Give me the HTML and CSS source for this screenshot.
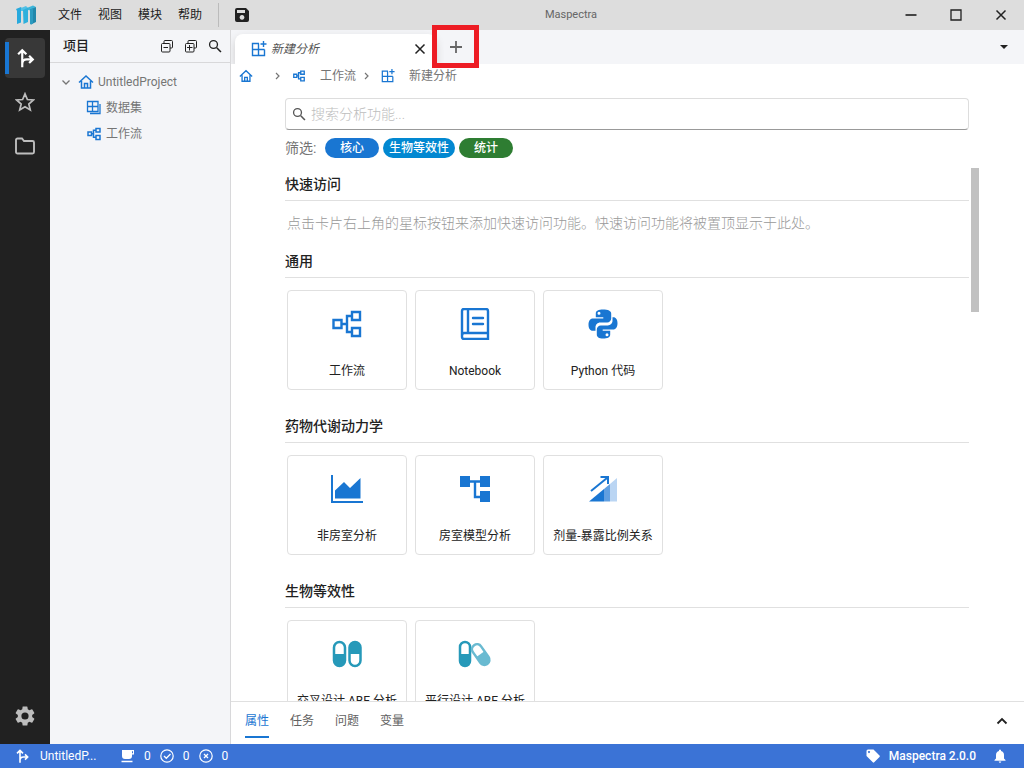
FILE: index.html
```html
<!DOCTYPE html>
<html lang="zh-CN">
<head>
<meta charset="utf-8">
<title>Maspectra</title>
<link rel="stylesheet" href="styles.css">
</head>
<body>
<svg class="defs" aria-hidden="true">
  <symbol id="home" viewBox="0 0 16 16"><path d="M1 8.500 8 2l7 6.500M3.500 7v7h9V7M6.500 14V9.500h3V14" fill="none" stroke="currentColor" stroke-width="1.500"/></symbol>
  <symbol id="flow" viewBox="0 0 32 32"><path d="M4 12h7v7H4zM20 5h8v7h-8zM20 19h8v8h-8zM11 15.500h5M20 8.500h-5v14h5" fill="none" stroke="currentColor" stroke-width="3"/></symbol>
  <symbol id="newgrid" viewBox="0 0 16 16"><path d="M8 2.500H1.500v12h12V8.500M1.500 8.500h12M7.500 2.500v12M12.500 0v6M9.500 3h6" fill="none" stroke="currentColor" stroke-width="1.400"/></symbol>
  <symbol id="branch" viewBox="0 0 24 24"><path d="M9 22V4M4.500 8L9 3.500 13.500 8M9 18.500q0-5 5-5h6M16.500 9.500l4 4-4 4" fill="none" stroke="currentColor" stroke-width="2.400"/></symbol>
  <symbol id="search" viewBox="0 0 16 16"><path d="M10 10l4.800 4.800" fill="none" stroke="currentColor" stroke-width="1.800"/><circle cx="6.300" cy="6.300" r="4.500" fill="none" stroke="currentColor" stroke-width="1.500"/></symbol>
  <symbol id="chev" viewBox="0 0 8 8"><path d="M2 1l3 3-3 3" fill="none" stroke="currentColor" stroke-width="1.200"/></symbol>
  <symbol id="close" viewBox="0 0 12 12"><path d="M1.500 1.500l9 9M10.500 1.500l-9 9" fill="none" stroke="currentColor" stroke-width="1.500"/></symbol>
</svg>
<div class="app">
  <header class="titlebar">
    <svg class="logo" viewBox="0 0 20 20"><path d="M0 4l5-2v15.500L1 19V6z" fill="#27a9dd"/><path d="M5 2.500L8 4v2L5 5z" fill="#1c8dbd"/><path d="M5 3l5-2 2 2-5 3H5z" fill="#52c1e6"/><path d="M7 5l5-2.500V17l-4.500 2z" fill="#2fb0dc"/><path d="M12 2.500l5-2L20 2l-5.500 3.500L12 5z" fill="#3bb5da"/><path d="M14 4.500L20 2v15l-5 2.500-1-1z" fill="#2187ab"/><path d="M14 4.500l3-1.300V18.500l-2 1-1-1z" fill="#2b9bc1"/></svg>
    <nav class="menu"><button>文件</button><button>视图</button><button>模块</button><button>帮助</button></nav>
    <button class="save" aria-label="保存"><svg width="16" height="16" viewBox="0 0 16 16"><path fill-rule="evenodd" d="M3 1h9l3 3v9a2 2 0 0 1-2 2H3a2 2 0 0 1-2-2V3a2 2 0 0 1 2-2zM3 3v3h8V3zM8 8a2.400 2.400 0 1 0 .01 0z" fill="currentColor"/></svg></button>
    <span class="apptitle">Maspectra</span>
    <div class="winctl">
      <button aria-label="最小化"><svg width="12" height="12" viewBox="0 0 12 12"><path d="M0.500 6h11" stroke="#444" stroke-width="2"/></svg></button>
      <button aria-label="最大化"><svg width="12" height="12" viewBox="0 0 12 12"><path d="M1 1h10v10H1z" fill="none" stroke="currentColor" stroke-width="1.300"/></svg></button>
      <button aria-label="关闭"><svg width="12" height="12"><use href="#close"/></svg></button>
    </div>
  </header>
  <div class="body">
    <nav class="rail">
      <button class="active" aria-label="项目"><svg width="22" height="22"><use href="#branch"/></svg></button>
      <button aria-label="收藏"><svg width="20" height="20" viewBox="0 0 20 20"><path d="M10 1.800l2.400 5.700 6 .5-4.600 4 1.500 6-5.300-3.200L4.700 18l1.500-6-4.600-4 6-.5z" fill="none" stroke="currentColor" stroke-width="1.700"/></svg></button>
      <button aria-label="文件夹"><svg width="20" height="20" viewBox="0 0 20 20"><path d="M1 16V4a1.500 1.500 0 0 1 1.500-1.500H7l2 2.500h8.500A1.500 1.500 0 0 1 19 6.500V16a1.500 1.500 0 0 1-1.500 1.500h-15A1.500 1.500 0 0 1 1 16z" fill="none" stroke="currentColor" stroke-width="1.900"/></svg></button>
      <button class="gear" aria-label="设置"><svg width="24" height="24" viewBox="0 0 24 24"><path fill="currentColor" d="M19.140 12.940c.04-.3.060-.61.060-.94 0-.32-.02-.64-.07-.94l2.030-1.580a.49.49 0 0 0 .12-.61l-1.920-3.320a.49.49 0 0 0-.59-.22l-2.390.96c-.5-.38-1.030-.7-1.620-.94l-.36-2.540A.48.48 0 0 0 13.920 2.400h-3.840c-.24 0-.43.17-.47.41l-.36 2.540c-.59.24-1.130.57-1.620.94l-2.390-.96a.48.48 0 0 0-.59.220L2.740 8.870a.47.47 0 0 0 .12.610l2.030 1.580c-.05.3-.09.630-.09.940s.02.640.07.940l-2.030 1.580a.49.49 0 0 0-.12.610l1.920 3.320c.12.220.37.290.59.220l2.390-.96c.5.380 1.030.7 1.620.940l.36 2.540c.05.240.24.410.48.410h3.840c.24 0 .44-.17.47-.41l.36-2.540c.59-.24 1.130-.56 1.620-.94l2.390.96c.22.080.47 0 .59-.22l1.920-3.320a.47.47 0 0 0-.12-.61zM12 15.600A3.600 3.600 0 1 1 12 8.400a3.600 3.600 0 0 1 0 7.200z"/></svg></button>
    </nav>
    <aside class="side">
      <div class="sidehead"><h2>项目</h2>
        <button aria-label="全部折叠"><svg width="14" height="14" viewBox="0 0 14 14"><path d="M4 4V2.500a1 1 0 0 1 1-1h6.500a1 1 0 0 1 1 1V8a1 1 0 0 1-1 1H10M2.500 4.500h6.500a1 1 0 0 1 1 1V12a1 1 0 0 1-1 1H2.500a1 1 0 0 1-1-1V5.500a1 1 0 0 1 1-1zM3.500 8.500h4.500" fill="none" stroke="currentColor"/></svg></button>
        <button aria-label="全部展开"><svg width="14" height="14" viewBox="0 0 14 14"><path d="M4 4V2.500a1 1 0 0 1 1-1h6.500a1 1 0 0 1 1 1V8a1 1 0 0 1-1 1H10M2.500 4.500h6.500a1 1 0 0 1 1 1V12a1 1 0 0 1-1 1H2.500a1 1 0 0 1-1-1V5.500a1 1 0 0 1 1-1zM3 8.500h5.500M5.500 6v5.500" fill="none" stroke="currentColor"/></svg></button>
        <button aria-label="搜索"><svg width="14" height="14"><use href="#search"/></svg></button>
      </div>
      <ul class="tree">
        <li><svg class="caret" width="8" height="8" viewBox="0 0 8 8"><path d="M0.500 2.500L4 6l3.500-3.500" fill="none" stroke="currentColor" stroke-width="1.300"/></svg><svg class="blue" width="16" height="16"><use href="#home"/></svg><span>UntitledProject</span></li>
        <li class="child"><svg class="blue" width="16" height="16" viewBox="0 0 16 16"><path d="M1.500 1.500h10.500v10H1.500zM1.500 6.500H12M6.500 1.500v10M4 13.500h10V4" fill="none" stroke="currentColor" stroke-width="1.300"/></svg><span>数据集</span></li>
        <li class="child"><svg class="blue" width="16" height="16"><use href="#flow"/></svg><span>工作流</span></li>
      </ul>
    </aside>
    <main class="main">
      <div class="tabs">
        <div class="tab"><svg class="blue" width="16" height="16"><use href="#newgrid"/></svg><span>新建分析</span><button aria-label="关闭标签"><svg width="12" height="12"><use href="#close"/></svg></button></div>
        <button class="add" aria-label="新建标签"><svg width="12" height="12" viewBox="0 0 12 12"><path d="M6 0v12M0 6h12" stroke="currentColor" stroke-width="1.800"/></svg><i class="mark"></i></button>
        <button class="more" aria-label="更多标签"><svg width="8" height="8" viewBox="0 0 8 8"><path d="M0 2h8L4 6z" fill="currentColor"/></svg></button>
      </div>
      <nav class="crumbs">
        <a href="#" aria-label="主页"><svg class="blue" width="14" height="14"><use href="#home"/></svg></a>
        <svg class="sep wide" width="8" height="8"><use href="#chev"/></svg>
        <a href="#"><svg class="blue" width="14" height="14"><use href="#flow"/></svg>工作流</a>
        <svg class="sep" width="8" height="8"><use href="#chev"/></svg>
        <a href="#"><svg class="blue" width="14" height="14"><use href="#newgrid"/></svg>新建分析</a>
      </nav>
      <div class="page">
        <label class="search"><svg width="14" height="14"><use href="#search"/></svg><input type="text" placeholder="搜索分析功能..." aria-label="搜索分析功能"></label>
        <div class="filters"><span>筛选:</span><button>核心</button><button class="be">生物等效性</button><button class="stat">统计</button></div>
        <div class="scroller">
          <div class="sections">
            <section><h3>快速访问</h3><p>点击卡片右上角的星标按钮来添加快速访问功能。快速访问功能将被置顶显示于此处。</p></section>
            <section><h3>通用</h3><div class="cards">
              <button class="card"><svg viewBox="0 0 32 32"><path d="M2.500 12h8v8h-8zM21 4h8v8h-8zM21 20h8v8h-8zM11 16h5M21 8h-5v16h5" fill="none" stroke="currentColor" stroke-width="2.400"/></svg><span>工作流</span></button>
              <button class="card"><svg viewBox="0 0 32 32"><path d="M5 1h22q2 0 2 2v28H5q-2 0-2-2V3q0-2 2-2zM9 1v24M3 28q0-3 2-3h24" fill="none" stroke="currentColor" stroke-width="2.400"/><path d="M14 10h10M14 16h10" stroke="currentColor" stroke-width="2.400" stroke-linecap="round"/></svg><span>Notebook</span></button>
              <button class="card"><svg viewBox="0 0 32 32"><path fill-rule="evenodd" fill="currentColor" d="M15.800 1.500c-4 0-7 1-7 4v3.700h7.500v1.300H6c-3 0-4.500 2.700-4.500 6.300 0 3.500 1.500 6 4.200 6h2.800v-3.500c0-2.500 2-4.700 4.700-4.700h7c2.200 0 4-1.800 4-4V5.500c0-2.500-3-4-8.400-4zM12 3.700a1.500 1.500 0 1 1 0 3 1.500 1.500 0 0 1 0-3z"/><path fill-rule="evenodd" fill="currentColor" d="M16.200 30.500c4 0 7-1 7-4v-3.700h-7.500v-1.300H26c3 0 4.500-2.700 4.500-6.300 0-3.500-1.500-6-4.200-6h-.8v3.500c0 2.500-2 4.700-4.700 4.700h-7c-2.200 0-4 1.800-4 4v5.100c0 2.500 2 4 6.400 4zM20 28.300a1.500 1.500 0 1 1 0-3 1.500 1.500 0 0 1 0 3z"/></svg><span>Python 代码</span></button>
            </div></section>
            <section><h3>药物代谢动力学</h3><div class="cards">
              <button class="card"><svg viewBox="0 0 32 32"><path d="M1 2v27h31" fill="none" stroke="currentColor" stroke-width="2"/><path d="M4 25.500v-8l9-8.500 6 6L29.500 5v20.500z" fill="currentColor"/></svg><span>非房室分析</span></button>
              <button class="card"><svg viewBox="0 0 32 32"><path d="M1 3h10v11H1zM21 3h10v11H21zM21 18h10v11H21z" fill="currentColor"/><path d="M10 8.500h12M16 8.500V24h6" fill="none" stroke="currentColor" stroke-width="2.400"/></svg><span>房室模型分析</span></button>
              <button class="card"><svg viewBox="0 0 32 32"><path d="M2 28.500L17 16v12.500z" fill="currentColor"/><path d="M17 16l6-5v17.500h-6z" fill="#609fe1"/><path d="M23 11l7-6v23.500h-7z" fill="#bad5f3"/><path d="M4 18L20 5M13.500 4H21v7" fill="none" stroke="currentColor" stroke-width="2"/></svg><span>剂量-暴露比例关系</span></button>
            </div></section>
            <section><h3>生物等效性</h3><div class="cards">
              <button class="card teal"><svg viewBox="0 0 32 32"><rect x="3" y="4" width="11" height="24" rx="5.500" fill="none" stroke="currentColor" stroke-width="2.500"/><path d="M3 16h11v7a5 5 0 0 1-11 0z" fill="currentColor"/><rect x="18.500" y="4" width="11" height="24" rx="5.500" fill="none" stroke="currentColor" stroke-width="2.500"/><path d="M18.500 16h11V9a5 5 0 0 0-11 0z" fill="currentColor"/></svg><span>交叉设计 ABE 分析</span></button>
              <button class="card teal"><svg class="pills" viewBox="0 0 32 32"><rect x="1" y="4" width="10" height="24" rx="5" fill="none" stroke="currentColor" stroke-width="2.500"/><path d="M1 16h10v7a5 5 0 0 1-10 0z" fill="currentColor"/><g color="#69bad1" transform="rotate(-35 22 17)"><rect x="17" y="5" width="10" height="23" rx="5" fill="none" stroke="currentColor" stroke-width="2.500"/><path d="M17 16h10v7a5 5 0 0 1-10 0z" fill="currentColor"/></g></svg><span>平行设计 ABE 分析</span></button>
            </div></section>
          </div>
          <div class="bar"><div class="thumb"></div></div>
        </div>
      </div>
      <div class="panel"><button class="on">属性</button><button>任务</button><button>问题</button><button>变量</button><button class="up" aria-label="展开面板"><svg width="12" height="12" viewBox="0 0 12 12"><path d="M1.500 8.500L6 4l4.500 4.500" fill="none" stroke="currentColor" stroke-width="1.800"/></svg></button></div>
    </main>
  </div>
  <footer class="status">
    <svg class="proj" width="16" height="16"><use href="#branch"/></svg><span class="pname">UntitledP...</span>
    <svg width="14" height="14" viewBox="0 0 14 14"><path fill-rule="evenodd" d="M1 1h12v4.500h-2V7a3 3 0 0 1-3 3H4a3 3 0 0 1-3-3zM11 2.200v2h1v-2z" fill="currentColor"/><path d="M0.500 12.500h11" stroke="currentColor" stroke-width="1.500"/></svg><span class="n">0</span>
    <svg width="14" height="14" viewBox="0 0 14 14"><circle cx="7" cy="7" r="6.200" fill="none" stroke="currentColor" stroke-width="1.200"/><path d="M4 7l2.300 2.300L10.500 5" fill="none" stroke="currentColor" stroke-width="1.300"/></svg><span class="n">0</span>
    <svg width="14" height="14" viewBox="0 0 14 14"><circle cx="7" cy="7" r="6.200" fill="none" stroke="currentColor" stroke-width="1.200"/><path d="M5 5l4 4M9 5L5 9" fill="none" stroke="currentColor" stroke-width="1.300"/></svg><span class="n">0</span>
    <div class="right"><svg width="14" height="14" viewBox="0 0 14 14"><path fill-rule="evenodd" d="M0.500 2a1.500 1.500 0 0 1 1.500-1.500h5.500l6 6q.7.700 0 1.400L8.200 13.300q-.7.700-1.400 0L0.500 7zM3 2a1 1 0 1 0 .01 0z" fill="currentColor"/></svg><span>Maspectra 2.0.0</span><svg class="bell" width="14" height="14" viewBox="0 0 14 14"><path d="M6 2V.8h2V2c2 .5 3 2 3 4v3.500l1.500 1.500v.700h-11V11L3 9.500V6c0-2 1-3.500 3-4zM5.700 12.500h2.600q-.2 1.200-1.300 1.200t-1.300-1.200z" fill="currentColor"/></svg></div>
  </footer>
</div>
</body>
</html>
```
FILE: styles.css
```css
* { box-sizing: border-box; }
body { margin: 0; font: 12px/16px Roboto, "Noto Sans CJK SC", sans-serif; color: #212121; }
button { border: 0; padding: 0; background: none; font: inherit; color: inherit; cursor: pointer; }
svg { display: block; flex: none; }
a { color: inherit; text-decoration: none; }
h2, h3, p, ul { margin: 0; padding: 0; }
.defs { position: absolute; width: 0; height: 0; }
.blue { color: #1976d2; }

.app { height: 100vh; display: flex; flex-direction: column; overflow: hidden; }
.titlebar { position: relative; flex: none; height: 30px; display: flex; align-items: center; background: #ddd; }
.logo { width: 20px; height: 20px; margin-left: 16px; }
.menu { display: flex; gap: 16px; margin-left: 22px; padding-right: 16px; border-right: 1px solid #bbb; line-height: 24px; }
.save { margin-left: 15px; }
.apptitle { position: absolute; left: 50%; width: 120px; margin-left: -1px; text-align: center; font-size: 11px; color: #666; }
.winctl { display: flex; margin-left: auto; padding-right: 1px; }
.winctl button { width: 45px; height: 30px; display: grid; place-items: center; }

.body { flex: 1; min-height: 0; display: flex; }
.rail { flex: none; width: 50px; background: #212121; color: #bdbdbd; display: flex; flex-direction: column; align-items: center; gap: 4px; padding: 8px 0; }
.rail button { width: 40px; height: 40px; display: grid; place-items: center; border-radius: 4px; }
.rail .active { background: linear-gradient(#1976d2, #1976d2) 0 50% / 4px 32px no-repeat #383838; color: #fff; }
.rail .gear { margin-top: auto; }

.side { flex: none; width: 181px; background: #f4f5f8; border-right: 1px solid #d8d8da; }
.sidehead { height: 33px; display: flex; align-items: center; gap: 10px; padding: 0 8px 0 13px; border-bottom: 1px solid #d8d8da; }
.sidehead h2 { font-size: 13px; font-weight: 500; margin-right: auto; }
.tree { list-style: none; padding: 6px 0; color: #757575; }
.tree li { height: 26px; display: flex; align-items: center; gap: 4px; padding-left: 12px; }
.tree .child { padding-left: 36px; }
.tree .caret { margin-right: 4px; }

.main { flex: 1; min-width: 0; display: flex; flex-direction: column; background: #fff; }
.tabs { flex: none; height: 34px; display: flex; align-items: stretch; background: #f4f5f8; padding-top: 4px; }
.tab { width: 201px; margin-left: 4px; display: flex; align-items: center; gap: 4px; padding: 0 10px 0 16px; background: #fff; border-radius: 8px 8px 0 0; box-shadow: 0 4px 8px #ccc; clip-path: inset(-4px -8px 0 -4px); color: #555; font-style: italic; }
.tab button { margin-left: auto; color: #212121; }
.add { position: relative; width: 40px; padding-bottom: 4px; display: grid; place-items: center; color: #666; }
.mark { position: absolute; top: -9px; left: -4px; width: 47px; height: 43px; border: 5px solid #ed1c24; z-index: 1; }
.more { margin: 0 16px 4px auto; }
.crumbs { flex: none; height: 24px; display: flex; align-items: center; padding-left: 8px; color: #757575; }
.crumbs a { display: flex; align-items: center; gap: 14px; }
.crumbs .sep { margin: 0 10px 0 7px; }
.crumbs .wide { margin: 0 10px 0 21px; }

.page { flex: 1; min-height: 0; display: flex; flex-direction: column; padding: 10px 45px 0 54px; }
.search { flex: none; height: 32px; margin-right: 10px; display: flex; align-items: center; gap: 5px; padding: 0 6px; border: 1px solid #ddd; border-bottom-color: #999; border-radius: 4px; color: #555; }
.search input { flex: 1; min-width: 0; border: 0; outline: 0; padding: 0; background: none; font: 14px/20px Roboto, "Noto Sans CJK SC", sans-serif; }
.search input::placeholder { color: #bdbdbd; font-weight: 300; }
.filters { flex: none; display: flex; align-items: center; gap: 4px; padding: 8px 0 10px; color: #757575; font-size: 14px; }
.filters span { width: 36px; white-space: nowrap; }
.filters button { height: 20px; width: 54px; border-radius: 10px; background: #1976d2; color: #fff; font-size: 12px; font-weight: 500; }
.filters .be { width: 72px; background: #0288d1; }
.filters .stat { background: #2e7d32; }
.scroller { flex: 1; min-height: 0; display: flex; gap: 2px; }
.sections { flex: 1; min-width: 0; overflow-y: auto; scrollbar-width: none; }
.bar { width: 8px; }
.thumb { height: 27%; background: #c1c1c1; }
h3 { height: 33px; font-size: 14px; line-height: 32px; font-weight: 500; border-bottom: 1px solid #e0e0e0; }
.sections p { padding: 12px 2px; font-size: 14px; line-height: 20px; font-weight: 300; color: #999; }
.cards { display: flex; flex-wrap: wrap; gap: 8px; padding: 12px 2px 20px; }
.card { width: 120px; height: 100px; border: 1px solid #e0e0e0; border-radius: 4px; display: flex; flex-direction: column; align-items: center; justify-content: space-between; padding: 17px 0 10px; }
.card svg { width: 32px; height: 32px; color: #1976d2; }
.card .pills { overflow: visible; }
.teal svg { color: #2699b9; }

.panel { flex: none; height: 43px; display: flex; align-items: flex-start; gap: 21px; padding: 4px 16px 0 14px; border-top: 1px solid #e0e0e0; color: #616161; }
.panel button { height: 32px; border-bottom: 2px solid transparent; }
.panel .on { color: #1976d2; border-color: #1976d2; }
.panel .up { margin-left: auto; color: #212121; }
.status { flex: none; height: 24px; display: flex; align-items: center; background: #3b73d6; color: #fff; padding: 0 17px 0 14px; }
.pname { width: 61px; margin: 0 20px 0 10px; white-space: nowrap; }
.n { margin: 0 9px; }
.right { margin-left: auto; display: flex; align-items: center; gap: 9px; font-weight: 500; }
.bell { margin-left: 8px; }
.card.teal svg { color: #2699b9; }
```
